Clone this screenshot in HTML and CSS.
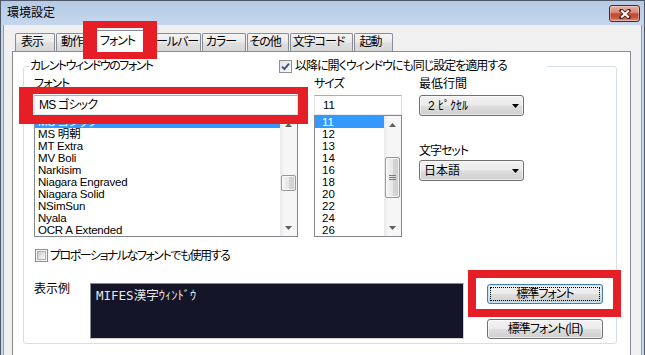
FILE: index.html
```html
<!DOCTYPE html>
<html lang="ja">
<head>
<meta charset="utf-8">
<title>環境設定</title>
<link rel="stylesheet" href="styles.css">
</head>
<body>
<div class="window">
  <div class="titlebar">
    <span class="title">環境設定</span>
    <div class="close" aria-label="閉じる">
      <svg width="12" height="10" viewBox="0 0 12 10"><path d="M2.2 1.6 L9.8 8.4 M9.8 1.6 L2.2 8.4" stroke="#4a1d1a" stroke-width="3.8" stroke-linecap="round" fill="none"/><path d="M2.2 1.6 L9.8 8.4 M9.8 1.6 L2.2 8.4" stroke="#ffffff" stroke-width="2" fill="none"/></svg>
    </div>
  </div>
  <div class="client">
    <div class="tabs">
      <div class="tab w40">表示</div>
      <div class="tab w38">動作</div>
      <div class="tab active">フォント</div>
      <div class="tab w56">ツールバー</div>
      <div class="tab w44">カラー</div>
      <div class="tab w42">その他</div>
      <div class="tab w63">文字コード</div>
      <div class="tab w39">起動</div>
    </div>
    <div class="panel">
      <div class="group">
        <div class="group-head">
          <span class="legend">カレントウィンドウのフォント</span>
          <div class="check">
            <span class="box checked"><svg width="11" height="11" viewBox="0 0 11 11"><path d="M2 5.6 L4.4 8 L9 2.6" stroke="#3f5277" stroke-width="1.9" fill="none"/></svg></span>
            <span>以降に開くウィンドウにも同じ設定を適用する</span>
          </div>
        </div>
        <div class="cols">
          <div class="col-font">
            <div class="lbl">フォント</div>
            <div class="edit font-edit">MS ゴシック</div>
            <div class="listbox">
              <ul class="items">
                <li class="sel">MS ゴシック</li>
                <li>MS 明朝</li>
                <li>MT Extra</li>
                <li>MV Boli</li>
                <li>Narkisim</li>
                <li>Niagara Engraved</li>
                <li>Niagara Solid</li>
                <li>NSimSun</li>
                <li>Nyala</li>
                <li>OCR A Extended</li>
              </ul>
              <div class="vscroll">
                <div class="arrow"><svg width="7" height="4" viewBox="0 0 7 4"><path d="M0 4 L3.5 0 L7 4Z" fill="#5f5f5f"/></svg></div>
                <div class="track font-track"><div class="thumb small"></div></div>
                <div class="arrow"><svg width="7" height="4" viewBox="0 0 7 4"><path d="M0 0 L3.5 4 L7 0Z" fill="#5f5f5f"/></svg></div>
              </div>
            </div>
          </div>
          <div class="col-size">
            <div class="lbl">サイズ</div>
            <div class="edit size-edit">11</div>
            <div class="listbox">
              <ul class="items nums">
                <li class="sel">11</li>
                <li>12</li>
                <li>13</li>
                <li>14</li>
                <li>16</li>
                <li>18</li>
                <li>20</li>
                <li>22</li>
                <li>24</li>
                <li>26</li>
              </ul>
              <div class="vscroll">
                <div class="arrow"><svg width="7" height="4" viewBox="0 0 7 4"><path d="M0 4 L3.5 0 L7 4Z" fill="#5f5f5f"/></svg></div>
                <div class="track size-track"><div class="thumb big"><svg width="7" height="5" viewBox="0 0 7 5"><path d="M0 0.5 H7 M0 2.5 H7 M0 4.5 H7" stroke="#7a7a7a" stroke-width="1"/></svg></div></div>
                <div class="arrow"><svg width="7" height="4" viewBox="0 0 7 4"><path d="M0 0 L3.5 4 L7 0Z" fill="#5f5f5f"/></svg></div>
              </div>
            </div>
          </div>
          <div class="col-opt">
            <div class="lbl kanji">最低行間</div>
            <div class="combo"><span class="combo-text">2 ﾋﾟｸｾﾙ</span><svg width="7" height="4" viewBox="0 0 7 4"><path d="M0 0 L3.5 4 L7 0Z" fill="#000"/></svg></div>
            <div class="lbl lbl-charset">文字セット</div>
            <div class="combo"><span class="combo-text tight">日本語</span><svg width="7" height="4" viewBox="0 0 7 4"><path d="M0 0 L3.5 4 L7 0Z" fill="#000"/></svg></div>
          </div>
        </div>
        <div class="check prop">
          <span class="box unchecked"><span class="box-inner"></span></span>
          <span>プロポーショナルなフォントでも使用する</span>
        </div>
        <div class="sample-row">
          <div class="sample-lbl">表示例</div>
          <div class="preview">MIFES漢字ｳｨﾝﾄﾞｳ</div>
          <div class="btns">
            <div class="btn default"><span class="focus">標準フォント</span></div>
            <div class="btn">標準フォント(旧)</div>
          </div>
        </div>
      </div>
    </div>
  </div>
</div>
<div class="mark mark-tab"></div>
<div class="mark mark-font"></div>
<div class="mark mark-btn"></div>
</body>
</html>
```

FILE: styles.css
```css
* { box-sizing: border-box; margin: 0; padding: 0; }
html, body { width: 645px; height: 355px; overflow: hidden; }
body {
  position: relative;
  background: #f0f0f0;
  font-family: "Liberation Sans", "Noto Sans CJK JP", sans-serif;
  font-size: 12px;
  letter-spacing: -1px;
  color: #000;
  font-feature-settings: "palt" 1;
}

.window {
  width: 645px;
  height: 355px;
  border: 1px solid #4e5866;
  border-bottom: 0;
  background: linear-gradient(#b6cae4, #c6d8ee 26px, #c6d8ee);
  display: flex;
  flex-direction: column;
  overflow: hidden;
}

.titlebar {
  height: 24px;
  flex: none;
  display: flex;
  justify-content: space-between;
  align-items: flex-start;
  padding-left: 6px;
}
.title { line-height: 25px; font-size: 12px; letter-spacing: 0; }
.close {
  margin: 4px 4px 0 0;
  width: 31px;
  height: 17px;
  border: 1px solid #5b211c;
  border-radius: 3px;
  background: linear-gradient(#eab0a6, #d98472 45%, #c4472f 52%, #c9543d 78%, #e39382);
  box-shadow: inset 0 0 0 1px rgba(255, 255, 255, 0.35);
  display: flex;
  align-items: center;
  justify-content: center;
}

.client {
  flex: 1;
  margin: 0 2px;
  border-left: 1px solid #8e9cad;
  border-right: 1px solid #8e9cad;
  background: #f0f0f0;
  padding: 5px 10px 0 8px;
  display: flex;
  flex-direction: column;
}

.tabs {
  height: 21px;
  margin-left: 3px;
  display: flex;
  align-items: flex-end;
  gap: 1px;
}
.tab {
  height: 18px;
  border: 1px solid #898c95;
  border-bottom: 0;
  border-radius: 2px 2px 0 0;
  background: linear-gradient(#f4f4f4, #ebebeb 45%, #dedede 55%, #d6d6d6);
  line-height: 16px;
  text-align: center;
  padding-right: 6px;
  white-space: nowrap;
  overflow: hidden;
}
.w38 { width: 38px; }
.w39 { width: 39px; }
.w40 { width: 40px; }
.w42 { width: 42px; }
.w44 { width: 44px; }
.w56 { width: 56px; }
.w63 { width: 63px; }
.tab.active {
  position: relative;
  z-index: 1;
  width: 53px;
  height: 22px;
  margin: 0 -2px -1px;
  background: #fff;
  padding-right: 4px;
  line-height: 20px;
}

.panel {
  flex: 1;
  border: 1px solid #898c95;
  border-bottom: 0;
  background: #fff;
  padding: 14px 13px 0 10px;
}

.group {
  border: 1px solid #d5dfe5;
  border-radius: 3px;
  padding: 0 0 4px 10px;
}
.group-head {
  display: flex;
  align-items: center;
  width: 518px;
  height: 14px;
  margin: -8px 0 0 -5px;
  background: #fff;
}
.legend {
  width: 250px;
  padding-left: 1px;
  line-height: 14px;
  white-space: nowrap;
  letter-spacing: -1.5px;
}

.check {
  display: flex;
  align-items: center;
  gap: 3px;
  line-height: 14px;
  white-space: nowrap;
}
.box {
  width: 13px;
  height: 13px;
  border: 1px solid #8f8f8f;
  display: flex;
  align-items: center;
  justify-content: center;
  flex: none;
}
.box.checked {
  background: linear-gradient(135deg, #dfe3e8, #fbfbfb);
}
.box.unchecked {
  background: #f4f4f4;
  padding: 1px;
}
.box-inner {
  display: block;
  width: 100%;
  height: 100%;
  border: 1px solid #adb2b8;
  background: linear-gradient(135deg, #c6cbd1, #eceef0 70%, #f7f7f7);
}

.cols {
  display: flex;
  align-items: flex-start;
  margin-top: 4px;
}
.lbl {
  line-height: 14px;
  height: 14px;
  margin-bottom: 4px;
  white-space: nowrap;
}
.lbl.kanji { letter-spacing: 0; }
.col-font { width: 264px; }
.col-size { width: 88px; margin-left: 16px; }
.col-opt { width: 105px; margin-left: 17px; }
.lbl-charset { margin-top: 28px; margin-bottom: 2px; }

.edit {
  height: 20px;
  border: 1px solid;
  border-color: #abadb3 #dbdfe6 #e3e9ef #e2e3ea;
  line-height: 18px;
  background: #fff;
  white-space: nowrap;
}
.font-edit { padding-left: 4px; letter-spacing: -0.8px; }
.size-edit { padding-left: 8px; font-size: 11.5px; letter-spacing: 0; }

.listbox {
  height: 122px;
  border: 1px solid #828790;
  display: flex;
  background: #fff;
}
.items {
  list-style: none;
  flex: 1;
  min-width: 0;
  font-size: 11.5px;
  letter-spacing: -0.2px;
}
.items li {
  height: 12px;
  line-height: 12px;
  padding-left: 3px;
  white-space: nowrap;
  overflow: hidden;
}
.items li.sel { background: #3399ff; color: #fff; }
.items.nums li { padding-left: 7px; letter-spacing: 0; }

.vscroll {
  width: 17px;
  flex: none;
  display: flex;
  flex-direction: column;
  background: linear-gradient(to right, #e9e9e9, #f6f6f6 25%, #f6f6f6);
}
.arrow {
  height: 17px;
  display: flex;
  align-items: center;
  justify-content: center;
}
.track { flex: 1; }
.font-track { padding-top: 42px; }
.size-track { padding-top: 24px; }
.thumb {
  margin: 0 1px;
  border: 1px solid #979797;
  border-radius: 2px;
  background: linear-gradient(to right, #f4f4f4, #e6e6e6 50%, #d5d5d5 55%, #cfcfcf);
  box-shadow: inset 0 0 0 1px rgba(255, 255, 255, 0.7);
  display: flex;
  align-items: center;
  justify-content: center;
}
.thumb.small { height: 16px; }
.thumb.big { height: 41px; }

.combo {
  height: 21px;
  border: 1px solid #707070;
  border-radius: 3px;
  background: linear-gradient(#f2f2f2, #ebebeb 48%, #dddddd 52%, #cfcfcf);
  box-shadow: inset 0 0 0 1px rgba(255, 255, 255, 0.6);
  display: flex;
  align-items: center;
  padding: 0 4px 0 8px;
}
.combo-text { flex: 1; line-height: 18px; white-space: nowrap; letter-spacing: 0; }
.combo-text.tight { margin-left: -4px; }

.prop {
  height: 15px;
  margin-top: 11px;
  padding-left: 1px;
  gap: 2px;
  letter-spacing: -1.5px;
}

.sample-row {
  display: flex;
  align-items: flex-start;
  margin-top: 20px;
}
.sample-lbl {
  width: 56px;
  line-height: 14px;
  margin-top: -1px;
  letter-spacing: 0;
}
.preview {
  width: 374px;
  height: 56px;
  border: 1px solid;
  border-color: #8a8a8a #d0d0d0 #d0d0d0 #8a8a8a;
  background: #15152a;
  color: #e8e8e8;
  font-family: "DejaVu Sans Mono", "Noto Sans CJK JP", monospace;
  font-feature-settings: normal;
  font-size: 12.5px;
  letter-spacing: 0;
  line-height: 16px;
  padding: 4px 5px;
  white-space: nowrap;
}
.btns {
  width: 116px;
  margin-left: 23px;
  margin-top: 1px;
  display: flex;
  flex-direction: column;
  gap: 15px;
}
.btn {
  height: 20px;
  border: 1px solid #707070;
  border-radius: 3px;
  background: linear-gradient(#f2f2f2, #ebebeb 48%, #dddddd 52%, #cfcfcf);
  box-shadow: inset 0 0 0 1px rgba(255, 255, 255, 0.7);
  display: flex;
  align-items: center;
  justify-content: center;
  line-height: 16px;
  white-space: nowrap;
}
.btn.default {
  border-color: #3c7fb1;
  box-shadow: inset 0 0 0 1px #c4e5f6;
  padding: 2px;
}
.focus {
  flex: 1;
  align-self: stretch;
  border: 1px dotted #000;
  text-align: center;
  line-height: 12px;
}

.mark {
  position: absolute;
  border-style: solid;
  border-color: #e61f27;
  z-index: 10;
  pointer-events: none;
}
.mark-tab { left: 83px; top: 21px; width: 74px; height: 38px; border-width: 7px 14px 7px 14px; }
.mark-font { left: 19px; top: 87px; width: 289px; height: 37px; border-width: 7px 10px 9px 14px; }
.mark-btn { left: 468px; top: 270px; width: 153px; height: 47px; border-width: 8px; }
```
